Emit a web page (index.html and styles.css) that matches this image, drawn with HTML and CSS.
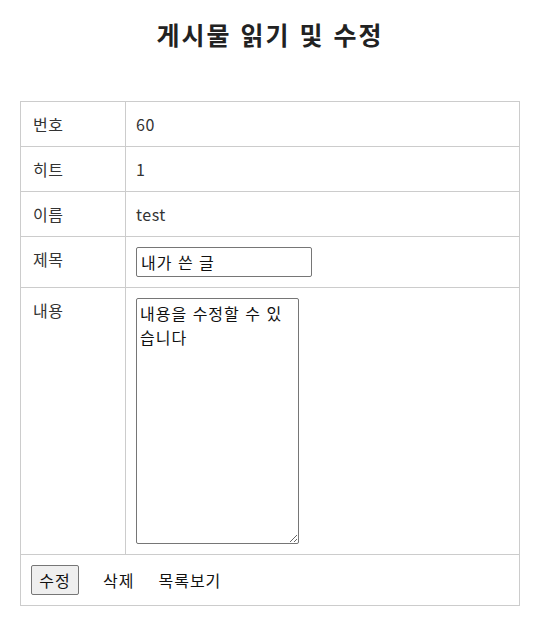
FILE: index.html
```html
<!DOCTYPE html>
<html lang="ko">
<head>
<meta charset="utf-8">
<title>게시물 읽기 및 수정</title>
<link rel="stylesheet" href="styles.css">
</head>
<body>
<div class="page">
  <h1 class="title">게시물 읽기 및 수정</h1>
  <form class="board-form">
    <table class="board">
      <tr><td class="label">번호</td><td class="value">60</td></tr>
      <tr><td class="label">히트</td><td class="value">1</td></tr>
      <tr><td class="label">이름</td><td class="value">test</td></tr>
      <tr><td class="label">제목</td><td class="value"><input class="subject" type="text" value="내가 쓴 글"></td></tr>
      <tr><td class="label">내용</td><td class="value"><textarea class="content">내용을 수정할 수 있습니다</textarea></td></tr>
      <tr><td class="actions" colspan="2"><button class="btn" type="button">수정</button><a class="link" href="#">삭제</a><a class="link" href="#">목록보기</a></td></tr>
    </table>
  </form>
</div>
</body>
</html>
```
FILE: styles.css
```css
html, body {
  margin: 0;
  padding: 0;
  background: #fff;
}
body {
  font-family: "Noto Sans CJK KR", "Noto Sans", sans-serif;
  color: #333;
  font-size: 16px;
}
.page {
  padding: 0 20px;
}
.title {
  width: 500px;
  text-align: center;
  font-size: 25px;
  letter-spacing: 2px;
  line-height: 32px;
  font-weight: bold;
  color: #222;
  margin: 18px 0 51px;
}
.board {
  width: 500px;
  border-collapse: collapse;
}
.board td {
  border: 1px solid #ccc;
  padding: 10px;
  line-height: 24px;
  vertical-align: top;
  font-size: 16px;
  letter-spacing: 0.5px;
}
.label {
  width: 82px;
  padding-left: 12px !important;
}
.subject {
  box-sizing: border-box;
  width: 176px;
  height: 30px;
  margin: 0;
  padding: 1px 4px;
  border: 1px solid #767676;
  border-radius: 2px;
  font-family: inherit;
  font-size: 16px;
  letter-spacing: 1px;
  color: #111;
  display: block;
}
.content {
  box-sizing: border-box;
  width: 163px;
  height: 246px;
  margin: 0;
  padding: 2px 3px;
  border: 1px solid #767676;
  border-radius: 2px;
  font-family: inherit;
  font-size: 16px;
  letter-spacing: 1px;
  line-height: 24px;
  color: #111;
  display: block;
  resize: both;
}
.btn {
  box-sizing: border-box;
  height: 30px;
  width: 48px;
  padding: 0;
  margin: 0 24px 0 0;
  border: 1px solid #767676;
  border-radius: 2px;
  background: #efefef;
  font-family: inherit;
  font-size: 16px;
  letter-spacing: 1px;
  color: #111;
  vertical-align: middle;
}
.link {
  color: #111;
  text-decoration: none;
  margin-right: 24px;
  font-size: 16px;
  letter-spacing: 1px;
  vertical-align: middle;
}
```
